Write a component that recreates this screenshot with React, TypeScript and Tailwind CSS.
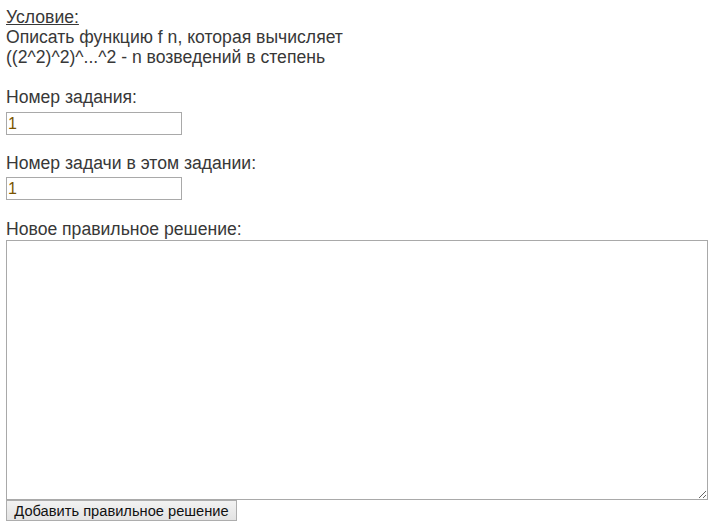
export default function App() {
  return (
    <div
      className="min-h-[530px] bg-white px-[6px] pt-[7px] text-[17.6px] leading-[20px] text-[#383838]"
      style={{ fontFamily: '"Liberation Sans", Arial, sans-serif' }}
    >
      <div className="underline">Условие:</div>
      <div>Описать функцию f n, которая вычисляет</div>
      <div>((2^2)^2)^...^2 - n возведений в степень</div>
      <div className="h-[20px]" />
      <div>Номер задания:</div>
      <input
        defaultValue="1"
        className="mt-[5px] block h-[23px] w-[176px] border border-[#a9a9a9] px-[1px] text-[16px] text-[#7a5500] outline-none"
      />
      <div className="mt-[18px]">Номер задачи в этом задании:</div>
      <input
        defaultValue="1"
        className="mt-[4px] block h-[23px] w-[176px] border border-[#a9a9a9] px-[1px] text-[16px] text-[#7a5500] outline-none"
      />
      <div className="mt-[19px]">Новое правильное решение:</div>
      <textarea className="mt-[1px] block h-[260px] w-[702px] resize-y border border-[#a9a9a9] outline-none" />
      <button className="block h-[21px] w-[231px] border border-[#adadad] bg-gradient-to-b from-[#f2f2f2] to-[#e3e3e3] text-[14.67px] leading-[18px] text-[#111111]">
        Добавить правильное решение
      </button>
    </div>
  );
}
